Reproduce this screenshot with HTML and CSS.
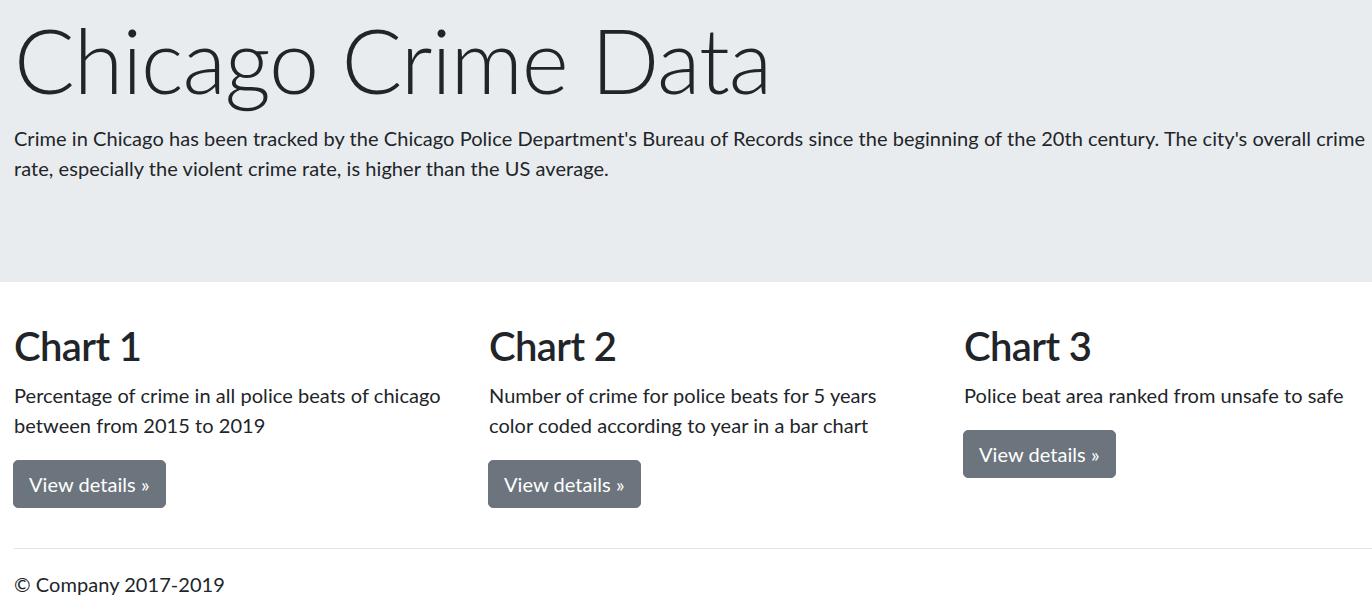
FILE: index.html
```html
<!DOCTYPE html>
<html lang="en">
<head>
<meta charset="utf-8">
<title>Chicago Crime Data</title>
<link rel="stylesheet" href="styles.css">
</head>
<body>
<div class="page">
  <main>
    <div class="jumbotron">
      <div class="container">
        <h1 class="display">Chicago Crime Data</h1>
        <p class="lead">Crime in Chicago has been tracked by the Chicago Police Department's Bureau of Records since the beginning of the 20th century. The city's overall crime rate, especially the violent crime rate, is higher than the US average.</p>
      </div>
    </div>
    <div class="container">
      <div class="row">
        <div class="col">
          <h2 class="chart-title">Chart 1</h2>
          <p class="text">Percentage of crime in all police beats of chicago between from 2015 to 2019</p>
          <p class="text"><a class="btn" href="#">View details &raquo;</a></p>
        </div>
        <div class="col">
          <h2 class="chart-title">Chart 2</h2>
          <p class="text">Number of crime for police beats for 5 years color coded according to year in a bar chart</p>
          <p class="text"><a class="btn" href="#">View details &raquo;</a></p>
        </div>
        <div class="col">
          <h2 class="chart-title">Chart 3</h2>
          <p class="text">Police beat area ranked from unsafe to safe</p>
          <p class="text"><a class="btn" href="#">View details &raquo;</a></p>
        </div>
      </div>
      <hr class="divider">
    </div>
  </main>
  <footer class="container">
    <p class="text">&copy; Company 2017-2019</p>
  </footer>
</div>
</body>
</html>
```
FILE: styles.css
```css
html, body {
  margin: 0;
  padding: 0;
  overflow: hidden;
}
body {
  font-family: Lato, "Open Sans", sans-serif;
  font-size: 20px;
  line-height: 30px;
  letter-spacing: 0.05px;
  color: #212529;
  background: #fff;
}
.page {
  width: 1425px;
}
.container {
  width: 1387px;
  padding-left: 14px;
  box-sizing: content-box;
}
.jumbotron {
  background: #e9ecef;
  padding: 5px 0 79px;
  margin-bottom: 40px;
}
.display {
  margin: 0 0 10px;
  font-size: 90px;
  font-weight: 300;
  line-height: 108px;
  letter-spacing: -1.1px;
}
.lead {
  margin: 0 0 20px;
  font-weight: 400;
}
.row {
  display: grid;
  grid-template-columns: repeat(3, 432px);
  column-gap: 43px;
}
.chart-title {
  margin: 0 0 10px;
  font-size: 40px;
  font-weight: 600;
  line-height: 48px;
  letter-spacing: -0.6px;
}
.text {
  margin: 0 0 20px;
}
.btn {
  display: inline-block;
  box-sizing: border-box;
  height: 48px;
  margin-left: -1px;
  padding: 8px 15px;
  background: #6c757d;
  border: 1px solid #6c757d;
  border-radius: 5px;
  color: #fff;
  text-decoration: none;
  line-height: 30px;
  vertical-align: top;
}
.divider {
  margin: 20px 0;
  border: 0;
  border-top: 1px solid #e5e5e5;
}
```
